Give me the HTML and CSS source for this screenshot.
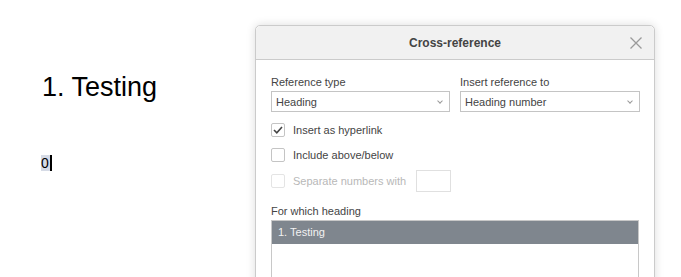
FILE: index.html
```html
<!DOCTYPE html>
<html lang="en">
<head>
<meta charset="utf-8"/>
<meta content="width=device-width, initial-scale=1" name="viewport"/>
<title>Cross-reference</title>
<link rel="stylesheet" href="styles.css">
</head>
<body>
<div class="document">
  <h1 class="doc-heading">1. Testing</h1>
  <p class="doc-line"><span class="selected">0</span><span class="caret"></span></p>
</div>

<div class="dialog">
  <div class="dialog-header">
    <span class="dialog-title">Cross-reference</span>
    <button class="close-btn" aria-label="Close">
      <svg width="12" height="12" viewBox="0 0 12 12"><path d="M0.5 0.5 L11.5 11.5 M11.5 0.5 L0.5 11.5" stroke="#9a9a9a" stroke-width="1.3" fill="none"/></svg>
    </button>
  </div>
  <div class="dialog-body">
    <div class="fields">
      <div class="field">
        <label>Reference type</label>
        <div class="combo"><span>Heading</span><i class="chevron"></i></div>
      </div>
      <div class="field">
        <label>Insert reference to</label>
        <div class="combo"><span>Heading number</span><i class="chevron"></i></div>
      </div>
    </div>

    <div class="check-row first">
      <span class="checkbox checked">
        <svg width="10" height="8" viewBox="0 0 10 8"><path d="M1 4 L3.8 6.8 L9 1" stroke="#444" stroke-width="1.6" fill="none"/></svg>
      </span>
      <span>Insert as hyperlink</span>
    </div>
    <div class="check-row">
      <span class="checkbox"></span>
      <span>Include above/below</span>
    </div>
    <div class="check-row disabled">
      <span class="checkbox"></span>
      <span>Separate numbers with</span>
      <span class="small-input"></span>
    </div>

    <label class="list-label">For which heading</label>
    <div class="list">
      <div class="list-item active">1. Testing</div>
    </div>
  </div>
</div>
</body>
</html>
```

FILE: styles.css
```css
body {
  margin: 0;
  background: #fff;
  font-family: 'Liberation Sans', Arial, sans-serif;
  overflow: hidden;
  height: 277px;
}
.document {
  padding: 72px 0 0 42px;
}
.doc-heading {
  margin: 0;
  font-size: 27px;
  font-weight: normal;
  line-height: 31px;
  color: #000;
}
.doc-line {
  margin: 52px 0 0 -1px;
  font-size: 14px;
  line-height: 16px;
  color: #000;
  display: flex;
  align-items: stretch;
}
.selected {
  background: #d6dbe6;
  padding: 0 1px 0 0;
}
.caret {
  width: 2px;
  background: #000;
}
.dialog {
  position: absolute;
  left: 255px;
  top: 25px;
  width: 398px;
  height: 300px;
  background: #fff;
  border: 1px solid #cbcbcb;
  border-radius: 5px 5px 0 0;
  box-shadow: 0 0 10px rgba(0, 0, 0, 0.14);
  color: #444;
  font-size: 11px;
}
.dialog-header {
  height: 33px;
  background: #f1f1f1;
  border-bottom: 1px solid #cbcbcb;
  border-radius: 5px 5px 0 0;
  display: flex;
  align-items: center;
  justify-content: center;
  position: relative;
}
.dialog-title {
  font-size: 12px;
  font-weight: bold;
  color: #444;
}
.close-btn {
  position: absolute;
  right: 12px;
  top: 11px;
  background: none;
  border: none;
  padding: 0;
  width: 12px;
  height: 12px;
  display: flex;
}
.dialog-body {
  padding: 15px 15px 0;
}
.fields {
  display: grid;
  grid-template-columns: 179px 180px;
  gap: 10px;
}
.field label {
  display: block;
  line-height: 14px;
  margin-bottom: 2px;
}
.combo {
  height: 19px;
  border: 1px solid #c4c4c4;
  display: flex;
  align-items: center;
  justify-content: space-between;
  padding: 0 7px 0 4px;
  color: #444;
}
.chevron {
  width: 3px;
  height: 3px;
  border-right: 1px solid #999;
  border-bottom: 1px solid #999;
  transform: rotate(45deg);
  margin-top: -2px;
}
.check-row {
  display: flex;
  align-items: center;
  height: 22px;
  margin-top: 3px;
}
.check-row.first {
  margin-top: 7px;
}
.checkbox {
  width: 12px;
  height: 12px;
  border: 1px solid #c4c4c4;
  border-radius: 2px;
  background: #fff;
  margin-right: 8px;
  display: flex;
  align-items: center;
  justify-content: center;
}
.check-row.disabled {
  color: #b8b8b8;
  margin-top: 4px;
}
.check-row.disabled .checkbox {
  border-color: #e4e4e4;
}
.small-input {
  width: 33px;
  height: 20px;
  border: 1px solid #e0e0e0;
  margin-left: 10px;
}
.list-label {
  display: block;
  line-height: 14px;
  margin-top: 12px;
  margin-bottom: 2px;
}
.list {
  border: 1px solid #c8c8c8;
  height: 120px;
}
.list-item {
  height: 23px;
  line-height: 23px;
  padding-left: 6px;
}
.list-item.active {
  background: #7f868e;
  color: #f2f2f2;
}
```
